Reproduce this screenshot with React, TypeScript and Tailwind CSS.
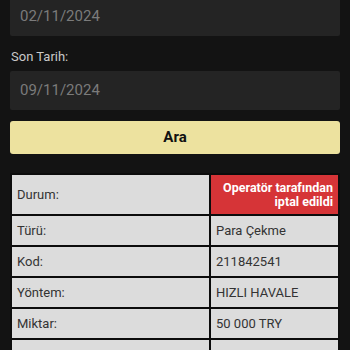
import React from 'react';

const rows: { label: string; value: string }[] = [
  { label: 'Türü:', value: 'Para Çekme' },
  { label: 'Kod:', value: '211842541' },
  { label: 'Yöntem:', value: 'HIZLI HAVALE' },
  { label: 'Miktar:', value: '50 000 TRY' },
  { label: '', value: '' },
];

export default function App() {
  return (
    <div
      className="w-[350px] h-[350px] overflow-hidden bg-[#131313]"
      style={{ fontFamily: 'Roboto, "Noto Sans", sans-serif' }}
    >
      <div className="-mt-[3px] px-[10px] flex flex-col">
        {/* Başlangıç tarihi */}
        <div className="h-[39px] bg-[#242424] rounded-[2px] flex items-center pl-[10px] text-[15px] text-[#7b7b7b]">
          02/11/2024
        </div>

        <label className="mt-[13px] pl-[1px] text-[13px] leading-[16px] text-[#c9c9c9]">Son Tarih:</label>

        <div className="mt-[6px] h-[39px] bg-[#242424] rounded-[2px] flex items-center pl-[10px] text-[15px] text-[#7b7b7b]">
          09/11/2024
        </div>

        <button className="mt-[11px] h-[33px] w-full rounded-[3px] bg-[#ede29f] text-[15px] font-bold text-[#111]">
          Ara
        </button>

        {/* İşlem detayları */}
        <div className="mt-[19px] bg-[#0c0c0c] p-[2px] flex flex-col gap-[2px]">
          <div className="flex gap-[2px]">
            <div className="w-[197px] h-[39px] bg-[#dcdcdc] flex items-center px-[5px] text-[13px] text-[#333]">
              Durum:
            </div>
            <div className="w-[127px] h-[39px] bg-[#d63437] flex items-center justify-end text-right px-[5px] text-[12.5px] leading-[14px] font-bold text-white">
              Operatör tarafından iptal edildi
            </div>
          </div>
          {rows.map((r, i) => (
            <div key={i} className="flex gap-[2px]">
              <div className="w-[197px] h-[29px] bg-[#dcdcdc] flex items-center px-[5px] text-[13px] text-[#333]">
                {r.label}
              </div>
              <div className="w-[127px] h-[29px] bg-[#dcdcdc] flex items-center px-[5px] text-[13px] text-[#333]">
                {r.value}
              </div>
            </div>
          ))}
        </div>
      </div>
    </div>
  );
}
